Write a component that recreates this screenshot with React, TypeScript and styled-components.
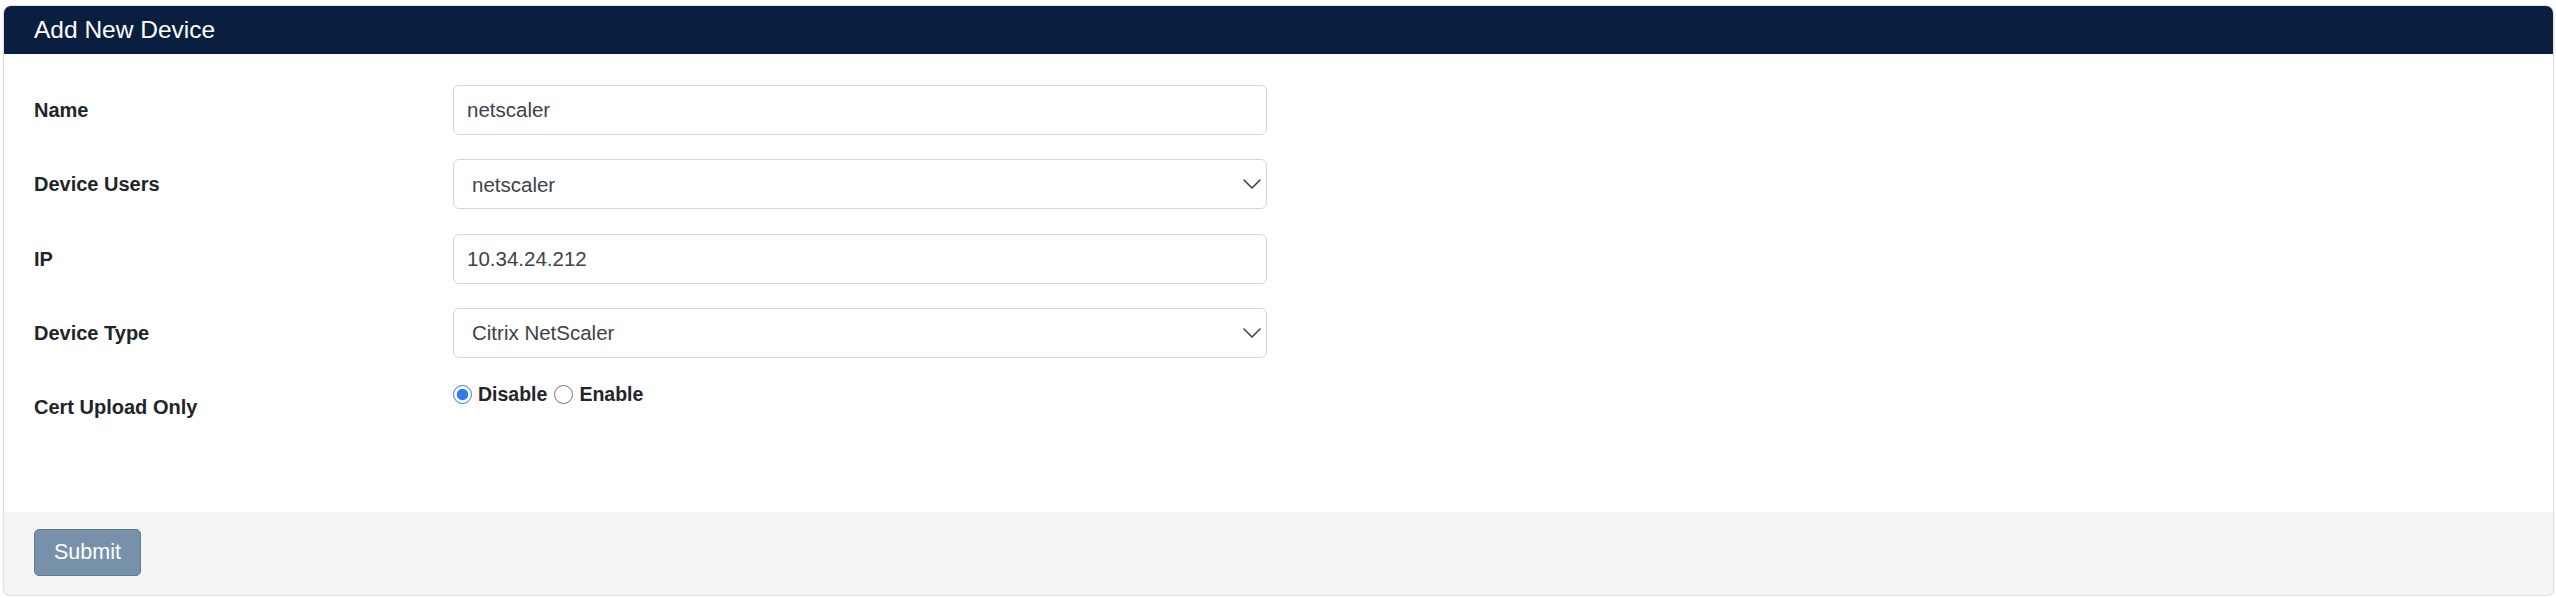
import styled, { createGlobalStyle } from "styled-components";

const GlobalStyle = createGlobalStyle`
  body {
    margin: 0;
    background: #ffffff;
    font-family: "Liberation Sans", Arial, sans-serif;
    color: #212529;
  }
`;

const fields = [
  { label: "Name", kind: "text", value: "netscaler" },
  { label: "Device Users", kind: "select", value: "netscaler" },
  { label: "IP", kind: "text", value: "10.34.24.212" },
  { label: "Device Type", kind: "select", value: "Citrix NetScaler" },
];

const Chevron = () => (
  <ChevronIcon width="18" height="10" viewBox="0 0 18 10" fill="none">
    <path d="M1 1l8 8 8-8" stroke="#3d4248" strokeWidth="1.6" strokeLinecap="round" strokeLinejoin="round" />
  </ChevronIcon>
);

export default function App() {
  return (
    <>
      <GlobalStyle />
      <Page>
        <Card>
          <CardHeader>Add New Device</CardHeader>
          <CardBody>
            {fields.map((f) => (
              <Row key={f.label}>
                <Label>{f.label}</Label>
                {f.kind === "text" ? (
                  <TextInput defaultValue={f.value} />
                ) : (
                  <SelectWrap>
                    <Select defaultValue={f.value}>
                      <option>{f.value}</option>
                    </Select>
                    <Chevron />
                  </SelectWrap>
                )}
              </Row>
            ))}
            <Row>
              <Label>Cert Upload Only</Label>
              <RadioGroup>
                <RadioLabel>
                  <Radio type="radio" name="certOnly" defaultChecked />
                  Disable
                </RadioLabel>
                <RadioLabel>
                  <Radio type="radio" name="certOnly" />
                  Enable
                </RadioLabel>
              </RadioGroup>
            </Row>
          </CardBody>
          <CardFooter>
            <SubmitButton>Submit</SubmitButton>
          </CardFooter>
        </Card>
      </Page>
    </>
  );
}

const Page = styled.div`
  padding: 5px 2px 0 3px;
`;

const Card = styled.div`
  background: #ffffff;
  border: 1px solid #e0e0e0;
  border-radius: 8px;
  box-shadow: 0 1px 2px rgba(0, 0, 0, 0.12);
  overflow: hidden;
`;

const CardHeader = styled.div`
  display: flex;
  align-items: center;
  height: 49px;
  padding: 0 31px;
  background: #0a1f3f;
  color: #ffffff;
  font-size: 24.5px;
  margin: -1px -1px 0;
`;

const CardBody = styled.div`
  display: flex;
  flex-direction: column;
  gap: 24.25px;
  padding: 31px 30px 80px;
`;

const Row = styled.div`
  display: grid;
  grid-template-columns: 419px 814px;
  align-items: start;
  min-height: 50px;
`;

const Label = styled.div`
  font-size: 20px;
  font-weight: 700;
  line-height: 50px;
  color: #212529;
`;

const fieldBase = `
  box-sizing: border-box;
  width: 814px;
  height: 50px;
  border: 1px solid #d3d6da;
  border-radius: 6px;
  background: #ffffff;
  font-family: "Liberation Sans", Arial, sans-serif;
  font-size: 20.5px;
  color: #3d4248;
  outline: none;
`;

const TextInput = styled.input`
  ${fieldBase}
  padding: 0 13px;
`;

const SelectWrap = styled.div`
  position: relative;
  width: 814px;
`;

const Select = styled.select`
  ${fieldBase}
  appearance: none;
  -webkit-appearance: none;
  padding: 0 40px 0 18px;
`;

const ChevronIcon = styled.svg`
  position: absolute;
  right: 6px;
  top: 20px;
  pointer-events: none;
`;

const RadioGroup = styled.div`
  display: flex;
  align-items: center;
  gap: 7px;
  padding-top: 3px;
  height: 19px;
`;

const RadioLabel = styled.label`
  display: flex;
  align-items: center;
  gap: 6px;
  font-size: 19.5px;
  font-weight: 700;
  color: #212529;
`;

const Radio = styled.input`
  width: 19px;
  height: 19px;
  margin: 0;
  accent-color: #2f7af5;
`;

const CardFooter = styled.div`
  background: #f5f5f5;
  padding: 17px 30px 19px;
`;

const SubmitButton = styled.button`
  height: 47px;
  padding: 0 19px;
  background: #7891aa;
  border: 1px solid #62798f;
  border-radius: 5px;
  color: #ffffff;
  font-family: "Liberation Sans", Arial, sans-serif;
  font-size: 21.5px;
`;
